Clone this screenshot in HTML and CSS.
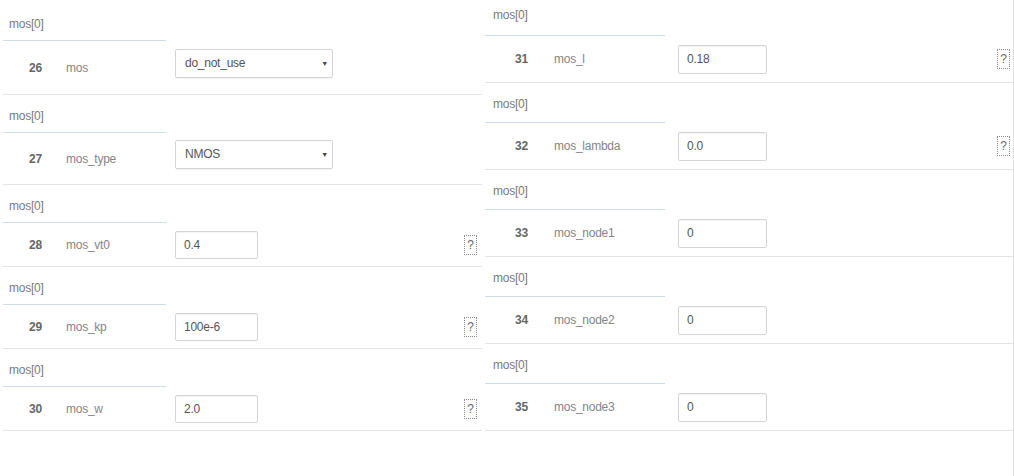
FILE: index.html
```html
<!DOCTYPE html>
<html>
<head>
<meta charset="utf-8">
<link rel="stylesheet" href="styles.css">
</head>
<body>
<div class="page">
  <div class="col col-l">
    <div class="blk first">
      <div class="hdr"><span>mos[0]</span></div>
      <div class="row sel-row">
        <span class="num">26</span><span class="name">mos</span>
        <div class="select"><span>do_not_use</span><span class="arrow">▼</span></div>
      </div>
    </div>
    <div class="blk">
      <div class="hdr"><span>mos[0]</span></div>
      <div class="row sel-row">
        <span class="num">27</span><span class="name">mos_type</span>
        <div class="select"><span>NMOS</span><span class="arrow">▼</span></div>
      </div>
    </div>
    <div class="blk">
      <div class="hdr"><span>mos[0]</span></div>
      <div class="row">
        <span class="num">28</span><span class="name">mos_vt0</span>
        <input class="inp" type="text" value="0.4">
        <span class="help">?</span>
      </div>
    </div>
    <div class="blk">
      <div class="hdr"><span>mos[0]</span></div>
      <div class="row">
        <span class="num">29</span><span class="name">mos_kp</span>
        <input class="inp" type="text" value="100e-6">
        <span class="help">?</span>
      </div>
    </div>
    <div class="blk">
      <div class="hdr"><span>mos[0]</span></div>
      <div class="row">
        <span class="num">30</span><span class="name">mos_w</span>
        <input class="inp" type="text" value="2.0">
        <span class="help">?</span>
      </div>
    </div>
  </div>
  <div class="col col-r">
    <div class="blk first">
      <div class="hdr"><span>mos[0]</span></div>
      <div class="row">
        <span class="num">31</span><span class="name">mos_l</span>
        <input class="inp" type="text" value="0.18">
        <span class="help">?</span>
      </div>
    </div>
    <div class="blk">
      <div class="hdr"><span>mos[0]</span></div>
      <div class="row">
        <span class="num">32</span><span class="name">mos_lambda</span>
        <input class="inp" type="text" value="0.0">
        <span class="help">?</span>
      </div>
    </div>
    <div class="blk">
      <div class="hdr"><span>mos[0]</span></div>
      <div class="row">
        <span class="num">33</span><span class="name">mos_node1</span>
        <input class="inp" type="text" value="0">
      </div>
    </div>
    <div class="blk">
      <div class="hdr"><span>mos[0]</span></div>
      <div class="row">
        <span class="num">34</span><span class="name">mos_node2</span>
        <input class="inp" type="text" value="0">
      </div>
    </div>
    <div class="blk">
      <div class="hdr"><span>mos[0]</span></div>
      <div class="row">
        <span class="num">35</span><span class="name">mos_node3</span>
        <input class="inp" type="text" value="0">
      </div>
    </div>
  </div>
</div>
</body>
</html>
```

FILE: styles.css
```css
html, body {
  margin: 0;
  padding: 0;
  background: #ffffff;
}
body {
  width: 1014px;
  height: 476px;
  overflow: hidden;
  font-family: "Liberation Sans", Arial, sans-serif;
  font-size: 12px;
  letter-spacing: -0.25px;
  color: #777;
}
.page {
  display: flex;
  align-items: flex-start;
}
.col {
  display: flex;
  flex-direction: column;
}
.col-l {
  width: 479px;
  margin-left: 3px;
}
.col-r {
  width: 528px;
  margin-left: 3px;
  border-right: 1px solid #e2e2e2;
  padding-bottom: 46px;
}
.blk {
  border-bottom: 1px solid #e2e4e6;
  display: flex;
  flex-direction: column;
}
.hdr {
  box-sizing: border-box;
  height: 38px;
  padding: 13px 0 0 6px;
  line-height: 16px;
  border-bottom: 1px solid #cfdbe8;
  color: #7a7a7a;
}
.col-l .hdr { width: 163px; }
.col-r .hdr { width: 180px; height: 40px; padding-left: 8px; }
.col-l .first .hdr { height: 41px; padding-top: 16px; }
.col-r .first .hdr { height: 36px; padding-top: 7px; }

.row {
  display: flex;
  align-items: center;
  height: 43px;
}
.col-r .row { height: 46px; }
.sel-row { height: 51px; }
.first .sel-row { height: 53px; }

.num {
  padding-left: 26px;
  box-sizing: border-box;
  width: 63px;
  font-weight: bold;
  color: #666;
}
.name {
  width: 109px;
  color: #858585;
}
.col-r .num { padding-left: 30px; width: 69px; }
.col-r .name { width: 124px; }

.select {
  box-sizing: border-box;
  width: 158px;
  height: 29px;
  margin-bottom: 9px;
  border: 1px solid #d4d4d4;
  border-radius: 2px;
  box-shadow: 0 1px 1px rgba(0,0,0,0.05);
  display: flex;
  align-items: center;
  justify-content: space-between;
  padding: 0 4px 0 9px;
  color: #555;
}
.arrow {
  font-size: 7px;
  color: #444;
}
.inp {
  box-sizing: border-box;
  width: 83px;
  height: 28px;
  border: 1px solid #d4d4d4;
  border-radius: 2px;
  box-shadow: inset 0 1px 1px rgba(0,0,0,0.04);
  padding: 0 8px;
  font-family: "Liberation Sans", Arial, sans-serif;
  font-size: 12px;
  letter-spacing: -0.25px;
  color: #555;
  outline: none;
  background: #fff;
}
.col-r .inp { width: 89px; height: 29px; }
.help {
  margin-left: auto;
  margin-right: 5px;
  box-sizing: border-box;
  width: 13px;
  height: 20px;
  border: 1px dotted #8a8a8a;
  font-size: 12px;
  line-height: 18px;
  letter-spacing: 0;
  text-align: center;
  color: #666;
}
.col-r .help { margin-right: 3px; }
```
